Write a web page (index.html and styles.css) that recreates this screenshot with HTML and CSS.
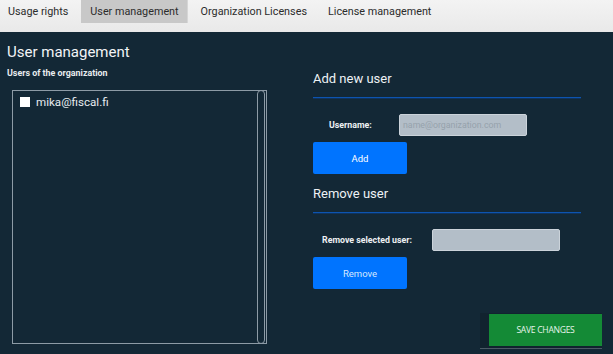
FILE: index.html
```html
<!DOCTYPE html>
<html>
<head>
<meta charset="utf-8">
<link rel="stylesheet" href="styles.css">
</head>
<body>
<nav class="tabs">
  <span class="tab">Usage rights</span>
  <span class="tab active">User management</span>
  <span class="tab">Organization Licenses</span>
  <span class="tab">License management</span>
</nav>
<main class="page">
  <section class="left">
    <h1 class="title">User management</h1>
    <div class="sublabel">Users of the organization</div>
    <div class="listbox">
      <div class="items">
        <label class="item"><span class="check"></span><span>mika@fiscal.fi</span></label>
      </div>
      <div class="scrolltrack"></div>
    </div>
  </section>
  <section class="right">
    <div class="block">
      <h2 class="heading">Add new user</h2>
      <div class="rule"></div>
      <div class="row row-add">
        <span class="lbl lbl-user">Username:</span>
        <span class="input placeholder">name@organization.com</span>
      </div>
      <button class="btn blue">Add</button>
    </div>
    <div class="block block-remove">
      <h2 class="heading">Remove user</h2>
      <div class="rule"></div>
      <div class="row row-remove">
        <span class="lbl lbl-remove">Remove selected user:</span>
        <span class="input"></span>
      </div>
      <button class="btn blue light">Remove</button>
    </div>
    <div class="savewrap">
      <button class="save">SAVE CHANGES</button>
    </div>
  </section>
</main>
</body>
</html>
```

FILE: styles.css
```css
* { box-sizing: border-box; }
html, body { margin: 0; padding: 0; }
body {
  width: 613px;
  height: 354px;
  overflow: hidden;
  background: #132836;
  font-family: Roboto, "Liberation Sans", sans-serif;
  color: #ffffff;
}
.tabs {
  height: 32px;
  display: flex;
  align-items: flex-start;
  background: linear-gradient(#f3f3f3, #e9e9e9);
}
.tab {
  height: 23px;
  line-height: 23px;
  font-size: 10.8px;
  color: #2c2c2c;
  padding: 0 8px;
  margin-right: 5px;
}
.tab.active {
  background: #c8c8c8;
  border-right: 1px solid #d6d6d6;
  padding-left: 9px;
}
.page {
  display: flex;
  padding-left: 7px;
}
.left {
  width: 260px;
  display: flex;
  flex-direction: column;
}
.title {
  margin: 11px 0 0 0;
  font-size: 15px;
  line-height: 19px;
  font-weight: 400;
  color: #f2f4f6;
}
.sublabel {
  margin-top: 6px;
  font-size: 8.9px;
  line-height: 11px;
  font-weight: 700;
  color: #e8ecef;
}
.listbox {
  margin: 11px 0 0 5px;
  width: 255px;
  height: 254px;
  border: 1px solid #8d9ba6;
  display: flex;
}
.items {
  flex: 1;
  padding: 5px 0 0 7px;
}
.item {
  display: flex;
  align-items: center;
  gap: 6px;
  font-size: 11.6px;
  line-height: 12px;
  color: #e6ebef;
}
.check {
  width: 10px;
  height: 10px;
  background: #ffffff;
  display: inline-block;
}
.scrolltrack {
  width: 8px;
  margin: -1px 1px -1px 0;
  border: 1px solid #8d9ba6;
  border-radius: 4px;
}
.right {
  width: 289px;
  margin-left: 46px;
  display: flex;
  flex-direction: column;
}
.block { width: 268px; display: flex; flex-direction: column; }
.heading {
  margin: 38px 0 0 0;
  font-size: 13px;
  line-height: 17px;
  font-weight: 400;
  color: #eef2f5;
}
.block-remove .heading { margin-top: 11px; }
.rule {
  margin-top: 10px;
  height: 1px;
  background: #0d54b0;
  box-shadow: 0 0.5px 0 #0a3f85;
}
.row {
  display: flex;
  align-items: center;
  margin-top: 16px;
}
.lbl {
  font-size: 8.8px;
  font-weight: 700;
  color: #eef1f4;
}
.lbl-user { padding-left: 16px; width: 86px; }
.lbl-remove { padding-left: 9px; width: 119px; }
.input {
  width: 128px;
  height: 22px;
  background: #b3bec8;
  border: 1px solid #cbd3da;
  border-radius: 2px;
  font-size: 8.8px;
  line-height: 20px;
  padding-left: 3px;
  color: #96a2ac;
}
.btn {
  margin-top: 6px;
  width: 94px;
  height: 32px;
  border: none;
  border-radius: 2px;
  background: #0074ff;
  color: #ffffff;
  font-family: Roboto, "Liberation Sans", sans-serif;
  font-size: 9.5px;
  padding: 0;
}
.btn.light { color: #d6e8ff; }
.savewrap {
  align-self: flex-end;
  margin-top: 24px;
  padding: 1px 0 2px 9px;
  background: #11232f;
  border-bottom: 1px solid #4b5a65;
}
.save {
  display: block;
  width: 113px;
  height: 32px;
  border: none;
  background: #148a36;
  color: #e6f4ea;
  font-family: "Open Sans", "Liberation Sans", sans-serif;
  font-size: 8.6px;
  letter-spacing: -0.3px;
  padding: 0;
}
```
